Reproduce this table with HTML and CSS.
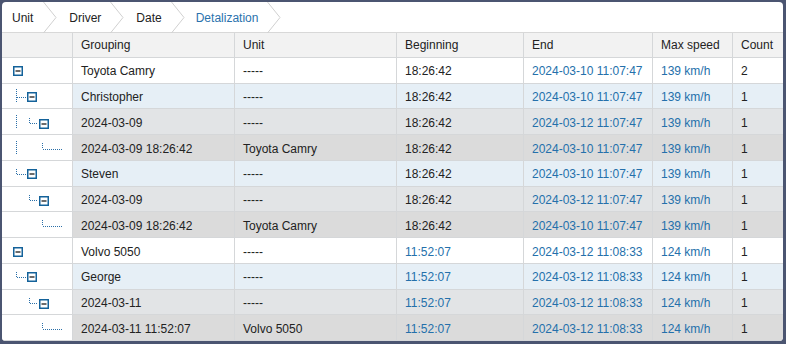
FILE: index.html
```html
<!DOCTYPE html>
<html>
<head>
<meta charset="utf-8">
<link rel="stylesheet" href="styles.css">
</head>
<body>
<svg class="defs" width="0" height="0">
  <symbol id="box" viewBox="0 0 10 10">
    <rect x=".75" y=".75" width="8.5" height="8.5" fill="#fff" stroke="#14629a" stroke-width="1.5"/>
    <path d="M2.5 5H7.5" stroke="#3a3a3a" stroke-width="1.5"/>
  </symbol>
</svg>
<div class="frame">
  <nav class="crumbs">
    <span class="crumb first">Unit</span>
    <svg class="chev" width="14" height="31" viewBox="0 0 14 31"><path d="M0.5 0L13 15.5L0.5 31"/></svg>
    <span class="crumb">Driver</span>
    <svg class="chev" width="14" height="31" viewBox="0 0 14 31"><path d="M0.5 0L13 15.5L0.5 31"/></svg>
    <span class="crumb">Date</span>
    <svg class="chev" width="14" height="31" viewBox="0 0 14 31"><path d="M0.5 0L13 15.5L0.5 31"/></svg>
    <span class="crumb active">Detalization</span>
    <svg class="chev" width="14" height="31" viewBox="0 0 14 31"><path d="M0.5 0L13 15.5L0.5 31"/></svg>
  </nav>
  <div class="table">
    <div class="row head">
      <div class="c tree"></div>
      <div class="c">Grouping</div>
      <div class="c">Unit</div>
      <div class="c">Beginning</div>
      <div class="c">End</div>
      <div class="c">Max speed</div>
      <div class="c">Count</div>
    </div>

    <div class="row l0">
      <div class="c tree"><svg width="70" height="26" viewBox="0 0 70 26"><use href="#box" x="11" y="8" width="10" height="10"/></svg></div>
      <div class="c">Toyota Camry</div>
      <div class="c">-----</div>
      <div class="c">18:26:42</div>
      <div class="c blue">2024-03-10 11:07:47</div>
      <div class="c blue">139 km/h</div>
      <div class="c">2</div>
    </div>

    <div class="row l1">
      <div class="c tree"><svg width="70" height="26" viewBox="0 0 70 26"><path class="dot" d="M14.5 5V18M15 13.5H24"/><use href="#box" x="25" y="8" width="10" height="10"/></svg></div>
      <div class="c">Christopher</div>
      <div class="c">-----</div>
      <div class="c">18:26:42</div>
      <div class="c blue">2024-03-10 11:07:47</div>
      <div class="c blue">139 km/h</div>
      <div class="c">1</div>
    </div>

    <div class="row l2">
      <div class="c tree"><svg width="70" height="26" viewBox="0 0 70 26"><path class="dot" d="M14.5 5V18M27.5 8V13M28 13.5H36"/><use href="#box" x="37" y="9" width="10" height="10"/></svg></div>
      <div class="c">2024-03-09</div>
      <div class="c">-----</div>
      <div class="c">18:26:42</div>
      <div class="c blue">2024-03-12 11:07:47</div>
      <div class="c blue">139 km/h</div>
      <div class="c">1</div>
    </div>

    <div class="row l3">
      <div class="c tree"><svg width="70" height="26" viewBox="0 0 70 26"><path class="dot" d="M14.5 5V18M40.5 7V13M41 13.5H61"/></svg></div>
      <div class="c">2024-03-09 18:26:42</div>
      <div class="c">Toyota Camry</div>
      <div class="c">18:26:42</div>
      <div class="c blue">2024-03-10 11:07:47</div>
      <div class="c blue">139 km/h</div>
      <div class="c">1</div>
    </div>

    <div class="row l1">
      <div class="c tree"><svg width="70" height="26" viewBox="0 0 70 26"><path class="dot" d="M14.5 8V13M15 13.5H24"/><use href="#box" x="25" y="8" width="10" height="10"/></svg></div>
      <div class="c">Steven</div>
      <div class="c">-----</div>
      <div class="c">18:26:42</div>
      <div class="c blue">2024-03-10 11:07:47</div>
      <div class="c blue">139 km/h</div>
      <div class="c">1</div>
    </div>

    <div class="row l2">
      <div class="c tree"><svg width="70" height="26" viewBox="0 0 70 26"><path class="dot" d="M27.5 8V13M28 13.5H36"/><use href="#box" x="37" y="9" width="10" height="10"/></svg></div>
      <div class="c">2024-03-09</div>
      <div class="c">-----</div>
      <div class="c">18:26:42</div>
      <div class="c blue">2024-03-12 11:07:47</div>
      <div class="c blue">139 km/h</div>
      <div class="c">1</div>
    </div>

    <div class="row l3">
      <div class="c tree"><svg width="70" height="26" viewBox="0 0 70 26"><path class="dot" d="M40.5 7V13M41 13.5H61"/></svg></div>
      <div class="c">2024-03-09 18:26:42</div>
      <div class="c">Toyota Camry</div>
      <div class="c">18:26:42</div>
      <div class="c blue">2024-03-10 11:07:47</div>
      <div class="c blue">139 km/h</div>
      <div class="c">1</div>
    </div>

    <div class="row l0">
      <div class="c tree"><svg width="70" height="26" viewBox="0 0 70 26"><use href="#box" x="11" y="8" width="10" height="10"/></svg></div>
      <div class="c">Volvo 5050</div>
      <div class="c">-----</div>
      <div class="c blue">11:52:07</div>
      <div class="c blue">2024-03-12 11:08:33</div>
      <div class="c blue">124 km/h</div>
      <div class="c">1</div>
    </div>

    <div class="row l1">
      <div class="c tree"><svg width="70" height="26" viewBox="0 0 70 26"><path class="dot" d="M14.5 8V13M15 13.5H24"/><use href="#box" x="25" y="8" width="10" height="10"/></svg></div>
      <div class="c">George</div>
      <div class="c">-----</div>
      <div class="c blue">11:52:07</div>
      <div class="c blue">2024-03-12 11:08:33</div>
      <div class="c blue">124 km/h</div>
      <div class="c">1</div>
    </div>

    <div class="row l2">
      <div class="c tree"><svg width="70" height="26" viewBox="0 0 70 26"><path class="dot" d="M27.5 8V13M28 13.5H36"/><use href="#box" x="37" y="9" width="10" height="10"/></svg></div>
      <div class="c">2024-03-11</div>
      <div class="c">-----</div>
      <div class="c blue">11:52:07</div>
      <div class="c blue">2024-03-12 11:08:33</div>
      <div class="c blue">124 km/h</div>
      <div class="c">1</div>
    </div>

    <div class="row l3">
      <div class="c tree"><svg width="70" height="26" viewBox="0 0 70 26"><path class="dot" d="M40.5 7V13M41 13.5H61"/></svg></div>
      <div class="c">2024-03-11 11:52:07</div>
      <div class="c">Volvo 5050</div>
      <div class="c blue">11:52:07</div>
      <div class="c blue">2024-03-12 11:08:33</div>
      <div class="c blue">124 km/h</div>
      <div class="c">1</div>
    </div>
  </div>
</div>
</body>
</html>
```
FILE: styles.css
```css
html, body {
  margin: 0;
  height: 100%;
}
body {
  box-sizing: border-box;
  padding: 2px 3px 3px 2px;
  background: #4b5571;
  font: 12px "Liberation Sans", Arial, sans-serif;
  color: #222;
}
.defs {
  position: absolute;
  width: 0;
  height: 0;
}
.frame {
  width: 781px;
  height: 339px;
  background: #fff;
  border-radius: 4px;
  overflow: hidden;
  display: flex;
  flex-direction: column;
}
.crumbs {
  box-sizing: border-box;
  height: 31px;
  flex: none;
  display: flex;
  align-items: center;
  border-bottom: 1px solid #d8d8d8;
}
.crumb {
  padding: 2px 9px 0 12px;
  color: #222;
}
.crumb.first {
  padding-left: 10px;
  padding-right: 10px;
}
.crumb.active {
  color: #2a72ad;
  padding-left: 11px;
}
.chev {
  display: block;
  flex: none;
  align-self: flex-start;
}
.chev path {
  fill: none;
  stroke: #d0d0d0;
  stroke-width: 1;
}
.table {
  flex: 1;
  display: flex;
  flex-direction: column;
}
.row {
  display: grid;
  grid-template-columns: 71px 162px 162px 127px 129px 80px 1fr;
  flex: 1 1 0;
  min-height: 0;
  box-sizing: border-box;
  border-bottom: 1px solid #d5d7d9;
}
.row.head {
  flex: none;
  height: 25px;
  background: #f2f2f2;
}
.c {
  display: flex;
  align-items: center;
  padding-left: 8px;
  border-right: 1px solid #d5d7d9;
  white-space: nowrap;
  overflow: hidden;
}
.row:not(.head) .c {
  padding-top: 2px;
}
.c:last-child {
  border-right: none;
}
.c.tree {
  padding-left: 0;
}
.row:not(.head) .c.tree {
  background: #fff;
}
.l0 { background: #fff; }
.l1 { background: #e6eff6; }
.l2 { background: #e2e4e6; }
.l3 { background: #dbdbdb; }
.blue {
  color: #2470ab;
}
.dot {
  fill: none;
  stroke: #2a6fa8;
  stroke-width: 1;
  stroke-dasharray: 1 1;
}
```
